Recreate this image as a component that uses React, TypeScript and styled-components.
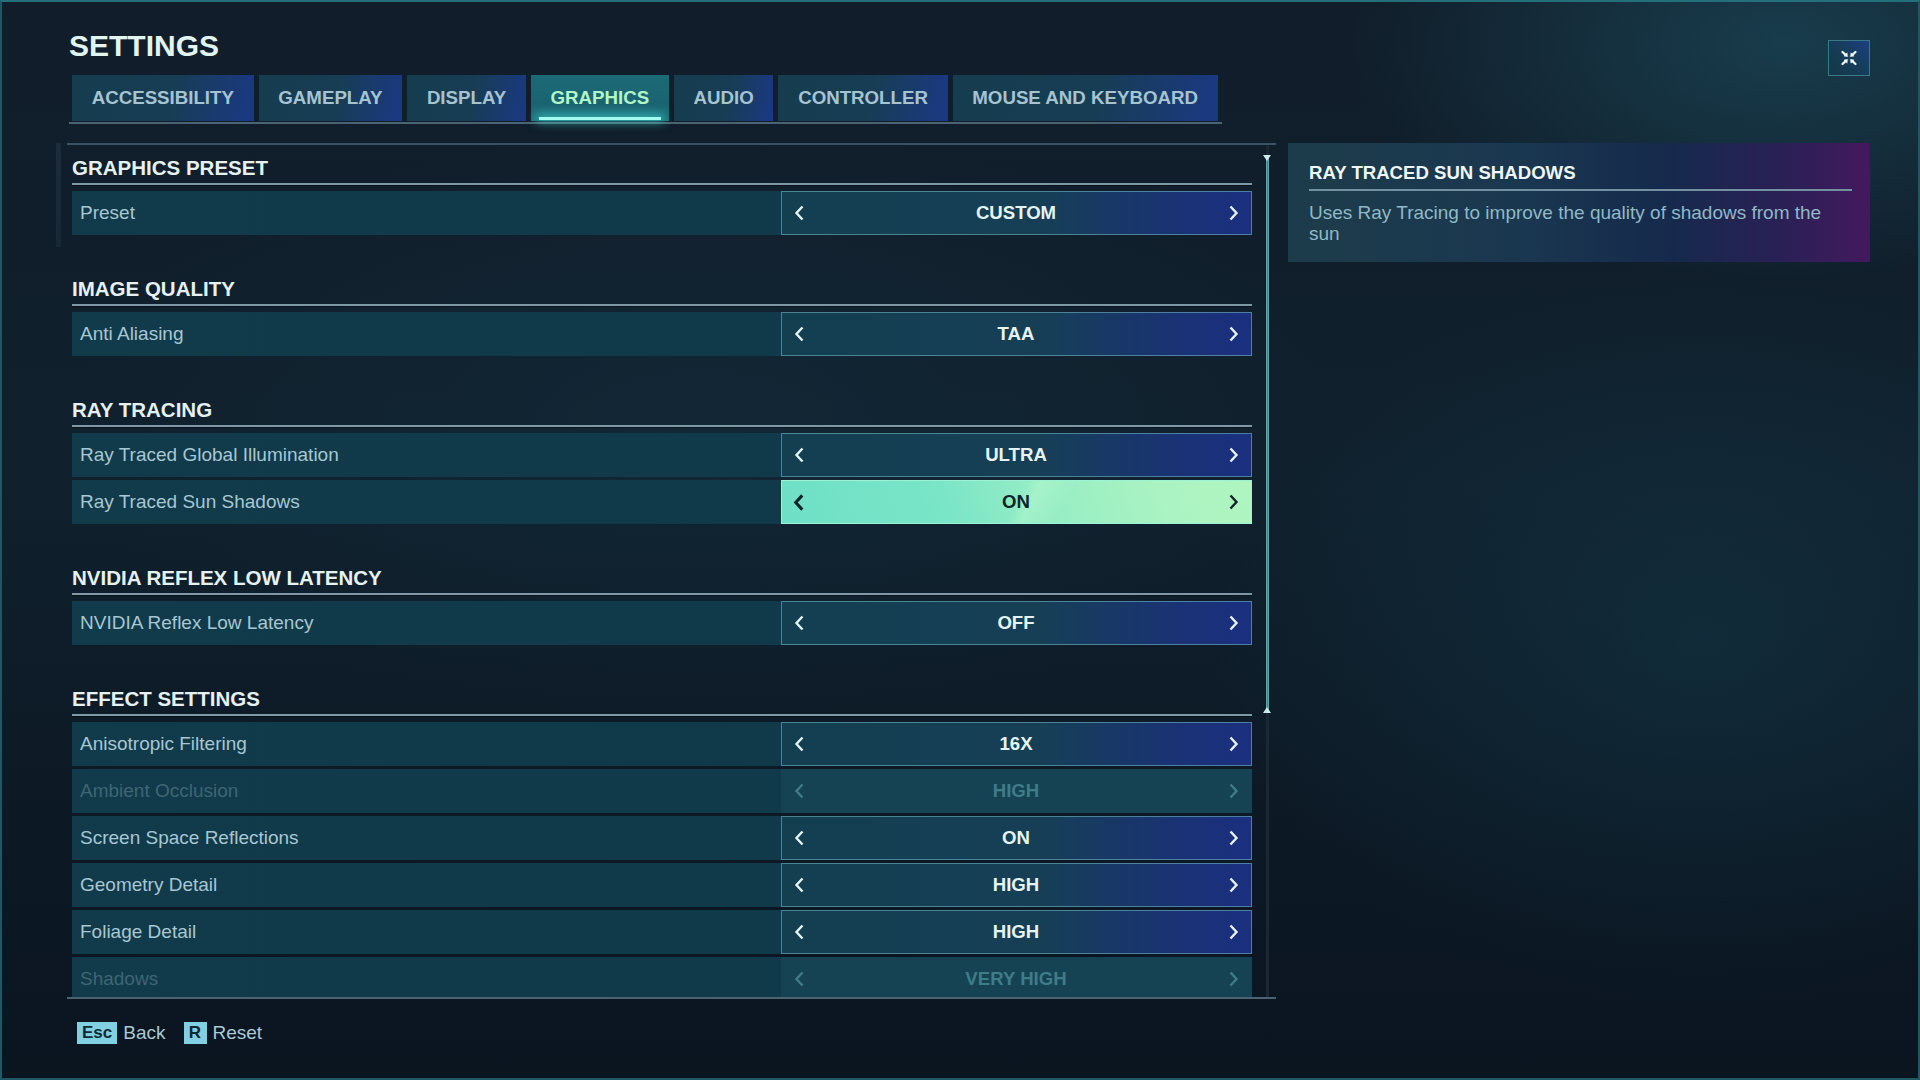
import React from "react";
import styled, { createGlobalStyle, css } from "styled-components";

const GlobalStyle = createGlobalStyle`
  html, body { margin: 0; padding: 0; background: #0e1a26; }
  body { font-family: "Liberation Sans", Arial, sans-serif; }
  * { box-sizing: border-box; }
`;

const FONT = `"Liberation Sans", Arial, sans-serif`;

const Page = styled.div`
  width: 1920px;
  height: 1080px;
  overflow: hidden;
  border: 2px solid #1d5864;
  border-top-color: #23707a;
  padding: 26px 48px 0 53px;
  display: flex;
  flex-direction: column;
  font-family: ${FONT};
  background:
    radial-gradient(ellipse 620px 340px at 1780px 40px, rgba(30, 86, 104, 0.55), transparent 70%),
    radial-gradient(ellipse 700px 520px at 1700px 640px, rgba(22, 70, 88, 0.35), transparent 70%),
    radial-gradient(ellipse 900px 420px at 700px 420px, rgba(22, 52, 70, 0.35), transparent 70%),
    linear-gradient(180deg, #111d2a 0%, #10202d 45%, #0c1824 80%, #0a1520 100%);
`;

const TopBar = styled.div`
  display: flex;
  justify-content: space-between;
  align-items: flex-start;
  height: 47px;
  padding-left: 14px;
`;

const Title = styled.h1`
  margin: 0;
  font-size: 30px;
  line-height: 36px;
  font-weight: 700;
  color: #e2f4ef;
`;

const CloseButton = styled.button`
  margin-top: 12px;
  width: 42px;
  height: 36px;
  border: 1px solid #3c7886;
  background: linear-gradient(225deg, #1d3f86 0%, #173d5a 45%, #133848 100%);
  display: flex;
  align-items: center;
  justify-content: center;
  padding: 0;
  color: #f2fbfb;
`;

const TabBar = styled.div`
  display: inline-flex;
  align-self: flex-start;
  gap: 5px;
  margin-left: 14px;
  padding: 0 4px 1px 3px;
  border-bottom: 2px solid #4b6474;
`;

const Tab = styled.div<{ $active?: boolean }>`
  position: relative;
  height: 46px;
  padding: 0 19.7px;
  display: flex;
  align-items: center;
  font-size: 18.7px;
  font-weight: 700;
  color: #a6c4d0;
  background: linear-gradient(100deg, #163c4f 0%, #173d55 55%, #1b3884 100%);
  ${(p) =>
    p.$active &&
    css`
      color: #b3f6c6;
      background: linear-gradient(180deg, #1c6a77 0%, #1a6472 60%, #1d6f7a 100%);
      &::after {
        content: "";
        position: absolute;
        left: 8px;
        right: 8px;
        bottom: 1px;
        height: 3px;
        background: #a4fbf2;
        box-shadow: 0 0 10px 3px rgba(70, 230, 220, 0.55);
      }
    `}
`;

const Body = styled.div`
  display: flex;
  align-items: flex-start;
  margin-top: 19px;
`;

const LeftRail = styled.div`
  width: 5px;
  height: 104px;
  margin-right: 6px;
  margin-left: 1px;
  background: linear-gradient(180deg, rgba(90, 120, 140, 0.16), rgba(90, 120, 140, 0.1));
`;

const Column = styled.div`
  width: 1209px;
  display: flex;
  flex-direction: column;
`;

const ListFrame = styled.div`
  border-top: 2px solid #3d5364;
  border-bottom: 2px solid #4a6272;
  height: 856px;
  display: flex;
  overflow: hidden;
`;

const ListContent = styled.div`
  width: 1185px;
  padding: 8px 0 0 5px;
  display: flex;
  flex-direction: column;
  gap: 39px;
`;

const ScrollTrack = styled.div`
  width: 3px;
  margin-left: 14px;
  height: 100%;
  background: #1a2833;
  display: flex;
  flex-direction: column;
`;

const ScrollThumb = styled.div<{ $top: number; $height: number }>`
  position: relative;
  margin-top: ${(p) => p.$top}px;
  height: ${(p) => p.$height}px;
  background: linear-gradient(90deg, #6fb3b8, #3f8690, #6fb3b8);
  &::before,
  &::after {
    content: "";
    position: absolute;
    left: -3px;
    width: 0;
    height: 0;
    border-left: 4.5px solid transparent;
    border-right: 4.5px solid transparent;
  }
  &::before {
    top: 0;
    border-top: 6px solid #cfe9ec;
  }
  &::after {
    bottom: 0;
    border-bottom: 6px solid #cfe9ec;
  }
`;

const Section = styled.section`
  display: flex;
  flex-direction: column;
`;

const SectionHeader = styled.h2`
  margin: 0 0 6px 0;
  height: 32px;
  font-size: 20.5px;
  line-height: 30px;
  font-weight: 700;
  color: #e6f1f1;
  border-bottom: 2px solid #7e98a6;
  box-shadow: 0 1px 0 rgba(0, 0, 0, 0.35);
`;

const Rows = styled.div`
  display: flex;
  flex-direction: column;
  gap: 3px;
`;

const Row = styled.div`
  display: grid;
  grid-template-columns: 1fr 471px;
  height: 44px;
  background: linear-gradient(90deg, #113a4a 0%, #10394a 50%, #123a4b 100%);
`;

const Label = styled.div<{ $disabled?: boolean }>`
  display: flex;
  align-items: center;
  padding-left: 8px;
  font-size: 19px;
  color: ${(p) => (p.$disabled ? "#3e6673" : "#a7c7d3")};
`;

const Control = styled.div<{ $active?: boolean; $disabled?: boolean }>`
  display: flex;
  align-items: center;
  padding: 0 12px 0 11px;
  border: 1px solid rgba(112, 180, 192, 0.6);
  color: #e6f4f1;
  background: linear-gradient(90deg, #133f51 0%, #163f56 55%, #1a3275 85%, #1b2f80 100%);
  ${(p) =>
    p.$disabled &&
    css`
      border-color: transparent;
      color: #3e7d88;
      background: #154353;
    `}
  ${(p) =>
    p.$active &&
    css`
      border-color: #9df2d6;
      color: #0f2329;
      background:
        linear-gradient(118deg, transparent 0%, transparent 50%, rgba(205, 255, 210, 0.3) 53%, transparent 60%),
        linear-gradient(72deg, #6ee0c6 0%, #7ae5c7 35%, #95edc5 55%, #aaf3c2 80%, #b0f5c0 100%);
    `}
`;

const Value = styled.div`
  flex: 1;
  text-align: center;
  font-size: 18.6px;
  font-weight: 700;
`;

const ArrowBox = styled.span`
  display: flex;
  width: 12px;
  justify-content: center;
  align-items: center;
`;

const InfoPanel = styled.aside`
  width: 582px;
  margin-left: 12px;
  padding: 18px 18px 18px 21px;
  background: linear-gradient(90deg, #1d3c4a 0%, #1a3750 40%, #152a4c 65%, #2a2056 85%, #43195e 100%);
`;

const InfoTitle = styled.h3`
  margin: 0;
  font-size: 18.6px;
  line-height: 24px;
  font-weight: 700;
  color: #eef6f6;
  padding-bottom: 4px;
  border-bottom: 2px solid #7290a0;
`;

const InfoText = styled.p`
  margin: 11px 0 0 0;
  font-size: 19px;
  line-height: 21px;
  color: #8fb9c6;
`;

const Footer = styled.div`
  display: flex;
  align-items: center;
  padding: 23px 0 0 10px;
  gap: 6px;
`;

const Key = styled.span`
  display: inline-flex;
  align-items: center;
  justify-content: center;
  height: 22px;
  min-width: 23px;
  padding: 0 5px;
  background: #80d0e1;
  color: #0e2a33;
  font-size: 17px;
  font-weight: 700;
`;

const KeyLabel = styled.span<{ $gapAfter?: boolean }>`
  font-size: 19px;
  color: #a9c9d4;
  margin-right: ${(p) => (p.$gapAfter ? 12 : 0)}px;
`;

const Chevron = ({ dir, bold }: { dir: "left" | "right"; bold?: boolean }) => (
  <svg width={bold ? 13 : 11} height={bold ? 19 : 16} viewBox="0 0 11 16" fill="none">
    <path
      d={dir === "left" ? "M8.5 1.5 L2.5 8 L8.5 14.5" : "M2.5 1.5 L8.5 8 L2.5 14.5"}
      stroke="currentColor"
      strokeWidth={bold ? 2.8 : 2.4}
      strokeLinejoin="miter"
    />
  </svg>
);

const CloseIcon = () => (
  <svg width="18" height="16" viewBox="0 0 18 16" fill="currentColor" stroke="currentColor" strokeWidth="2.2" strokeLinecap="round">
    <path d="M2.5 2 L5.6 4.9" fill="none" />
    <path d="M15.5 2 L12.4 4.9" fill="none" />
    <path d="M2.5 14 L5.6 11.1" fill="none" />
    <path d="M15.5 14 L12.4 11.1" fill="none" />
    <path d="M7.4 6.5 L4.1 6.1 L6.8 3.1 Z" strokeWidth="0.6" />
    <path d="M10.6 6.5 L13.9 6.1 L11.2 3.1 Z" strokeWidth="0.6" />
    <path d="M7.4 9.5 L4.1 9.9 L6.8 12.9 Z" strokeWidth="0.6" />
    <path d="M10.6 9.5 L13.9 9.9 L11.2 12.9 Z" strokeWidth="0.6" />
  </svg>
);

type Setting = { label: string; value: string; active?: boolean; disabled?: boolean };

const sections: { title: string; rows: Setting[] }[] = [
  { title: "GRAPHICS PRESET", rows: [{ label: "Preset", value: "CUSTOM" }] },
  { title: "IMAGE QUALITY", rows: [{ label: "Anti Aliasing", value: "TAA" }] },
  {
    title: "RAY TRACING",
    rows: [
      { label: "Ray Traced Global Illumination", value: "ULTRA" },
      { label: "Ray Traced Sun Shadows", value: "ON", active: true },
    ],
  },
  { title: "NVIDIA REFLEX LOW LATENCY", rows: [{ label: "NVIDIA Reflex Low Latency", value: "OFF" }] },
  {
    title: "EFFECT SETTINGS",
    rows: [
      { label: "Anisotropic Filtering", value: "16X" },
      { label: "Ambient Occlusion", value: "HIGH", disabled: true },
      { label: "Screen Space Reflections", value: "ON" },
      { label: "Geometry Detail", value: "HIGH" },
      { label: "Foliage Detail", value: "HIGH" },
      { label: "Shadows", value: "VERY HIGH", disabled: true },
    ],
  },
];

const tabs = ["ACCESSIBILITY", "GAMEPLAY", "DISPLAY", "GRAPHICS", "AUDIO", "CONTROLLER", "MOUSE AND KEYBOARD"];

export default function App() {
  return (
    <>
      <GlobalStyle />
      <Page>
        <TopBar>
          <Title>SETTINGS</Title>
          <CloseButton aria-label="Close">
            <CloseIcon />
          </CloseButton>
        </TopBar>
        <TabBar>
          {tabs.map((t) => (
            <Tab key={t} $active={t === "GRAPHICS"}>
              {t}
            </Tab>
          ))}
        </TabBar>
        <Body>
          <LeftRail />
          <Column>
            <ListFrame>
              <ListContent>
                {sections.map((s) => (
                  <Section key={s.title}>
                    <SectionHeader>{s.title}</SectionHeader>
                    <Rows>
                      {s.rows.map((r) => (
                        <Row key={r.label}>
                          <Label $disabled={r.disabled}>{r.label}</Label>
                          <Control $active={r.active} $disabled={r.disabled}>
                            <ArrowBox>
                              <Chevron dir="left" bold={r.active} />
                            </ArrowBox>
                            <Value>{r.value}</Value>
                            <ArrowBox>
                              <Chevron dir="right" />
                            </ArrowBox>
                          </Control>
                        </Row>
                      ))}
                    </Rows>
                  </Section>
                ))}
              </ListContent>
              <ScrollTrack>
                <ScrollThumb $top={10} $height={558} />
              </ScrollTrack>
            </ListFrame>
            <Footer>
              <Key>Esc</Key>
              <KeyLabel $gapAfter>Back</KeyLabel>
              <Key>R</Key>
              <KeyLabel>Reset</KeyLabel>
            </Footer>
          </Column>
          <InfoPanel>
            <InfoTitle>RAY TRACED SUN SHADOWS</InfoTitle>
            <InfoText>Uses Ray Tracing to improve the quality of shadows from the sun</InfoText>
          </InfoPanel>
        </Body>
      </Page>
    </>
  );
}
